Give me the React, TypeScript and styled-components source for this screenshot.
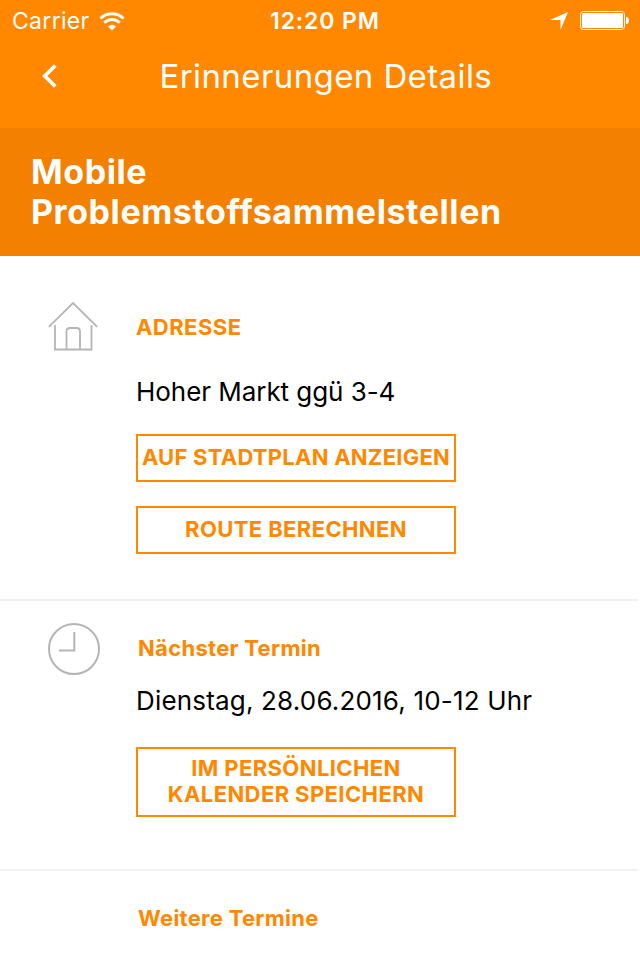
import React from "react";
import styled, { createGlobalStyle } from "styled-components";

const Global = createGlobalStyle`
  * { box-sizing: border-box; }
  body { margin: 0; background: #fff; font-family: Inter, "Liberation Sans", sans-serif; }
`;

const Screen = styled.main`
  width: 640px;
  height: 960px;
  overflow: hidden;
  background: #fff;
  color: #000;
`;

const Header = styled.header`
  height: 128px;
  background: #ff8800;
  color: #fff;
`;

const StatusBar = styled.div`
  display: grid;
  grid-template-columns: 258px auto 1fr;
  align-items: center;
  height: 40px;
  padding: 2px 11px 0 12px;
  font-size: 23px;
  line-height: 28px;
`;

const StatusGroup = styled.div<{ $end?: boolean }>`
  display: flex;
  align-items: center;
  justify-content: ${(p) => (p.$end ? "flex-end" : "flex-start")};
  gap: ${(p) => (p.$end ? 12 : 9)}px;
`;

const Text = styled.span<{ $spacing?: number; $weight?: number }>`
  white-space: nowrap;
  letter-spacing: ${(p) => p.$spacing ?? 0}px;
  font-weight: ${(p) => p.$weight ?? 400};
`;

const NavBar = styled.nav`
  display: grid;
  grid-template-columns: 159.500px 1fr;
  align-items: center;
  height: 72px;
`;

const BackButton = styled.button`
  display: flex;
  padding: 0 0 0 40px;
  border: 0;
  background: none;
  color: inherit;
`;

const NavTitle = styled.h1`
  margin: 0;
  font-size: 33px;
  font-weight: 400;
  line-height: 40px;
`;

const Banner = styled.div`
  height: 128px;
  padding: 24px 31px;
  background: #f48000;
  color: #fff;
`;

const BannerTitle = styled.h2`
  margin: 0;
  font-size: 34px;
  line-height: 40px;
`;

const Section = styled.section<{ $height: number; $top: number }>`
  display: grid;
  grid-template-columns: 88px 1fr;
  align-items: start;
  width: 638px;
  height: ${(p) => p.$height}px;
  padding: ${(p) => p.$top}px 0 0 48px;
  border-bottom: 2px solid #f1f1f1;
`;

const Body = styled.div<{ $top: number }>`
  padding-top: ${(p) => p.$top}px;
`;

const Label = styled.h3<{ $inset?: number }>`
  margin: 0 0 0 ${(p) => p.$inset ?? 0}px;
  color: #ff8800;
  font-size: 22px;
  line-height: 28px;
`;

const Value = styled.p<{ $top: number }>`
  margin: ${(p) => p.$top}px 0 0;
  font-size: 26px;
  line-height: 32px;
`;

const Action = styled.button<{ $top: number; $height?: number }>`
  display: flex;
  flex-direction: column;
  align-items: center;
  justify-content: center;
  width: 320px;
  height: ${(p) => p.$height ?? 48}px;
  margin-top: ${(p) => p.$top}px;
  padding: 0 0 2px;
  border: 2px solid #ff8800;
  background: #fff;
  color: #ff8800;
  font: 700 22px/26px Inter, "Liberation Sans", sans-serif;
`;

export default function App() {
  return (
    <>
      <Global />
      <Screen>
        <Header>
          <StatusBar>
            <StatusGroup>
              <Text $spacing={0.3}>Carrier</Text>
              <svg width="26" height="19" viewBox="0 0 26 19" fill="none" stroke="#fff" strokeWidth="3">
                <path d="M1.500 6.500a16.500 16.500 0 0 1 23 0M5.300 10.700a11 11 0 0 1 15.400 0" />
                <path d="M13 18.500l-4-4a5.700 5.700 0 0 1 8 0z" fill="#fff" stroke="none" />
              </svg>
            </StatusGroup>
            <Text $weight={600} $spacing={0.9}>12:20 PM</Text>
            <StatusGroup $end>
              <svg width="18" height="18" viewBox="0 0 18 18" fill="#fff"><path d="M18 0L10.500 18V8H0z" /></svg>
              <svg width="49" height="20" viewBox="0 0 49 20" fill="none">
                <rect x=".5" y=".5" width="44" height="18" rx="3" stroke="#fff" />
                <rect x="2" y="2" width="41" height="15" rx="1.500" fill="#fff" />
                <path d="M46 6h1q2 1 2 3.500t-2 3.500h-1z" fill="#fff" />
              </svg>
            </StatusGroup>
          </StatusBar>
          <NavBar>
            <BackButton aria-label="Zurück">
              <svg width="20" height="26" viewBox="0 0 20 26" fill="none" stroke="#fff" strokeWidth="3.800"><path d="M15.300 2.500L4.800 13l10.500 10.500" /></svg>
            </BackButton>
            <NavTitle><Text $spacing={0.4}>Erinnerungen Details</Text></NavTitle>
          </NavBar>
        </Header>
        <Banner>
          <BannerTitle><Text $weight={650} $spacing={0.57}>Mobile<br />Problemstoffsammelstellen</Text></BannerTitle>
        </Banner>
        <Section $height={345} $top={46}>
          <svg width="50" height="50" viewBox="0 0 50 50" fill="none" stroke="#b5b5b5" strokeWidth="1.800"><path d="M.8 24.800L25 1l24.200 23.800M7 23v24.500h36.500V23M18.500 47V29.500q0-3.500 3.500-3.500h6.500q3.500 0 3.500 3.500V47" /></svg>
          <Body $top={11}>
            <Label><Text $weight={650} $spacing={0.45}>ADRESSE</Text></Label>
            <Value $top={35}><Text $spacing={-0.05}>Hoher Markt ggü 3-4</Text></Value>
            <Action $top={26}><Text $weight={650} $spacing={0.25}>AUF STADTPLAN ANZEIGEN</Text></Action>
            <Action $top={24}><Text $weight={650} $spacing={0.38}>ROUTE BERECHNEN</Text></Action>
          </Body>
        </Section>
        <Section $height={270} $top={22}>
          <svg width="52" height="52" viewBox="0 0 52 52" fill="none" stroke="#b5b5b5" strokeWidth="2"><circle cx="26" cy="26" r="25" /><path d="M26.300 9v18.500H11" /></svg>
          <Body $top={11}>
            <Label $inset={2}><Text $weight={650} $spacing={0.3}>Nächster Termin</Text></Label>
            <Value $top={23}><Text $spacing={0.18}>Dienstag, 28.06.2016, 10-12 Uhr</Text></Value>
            <Action $top={30} $height={70}>
              <Text $weight={650} $spacing={0.4}>IM PERSÖNLICHEN</Text>
              <Text $weight={650} $spacing={0.4}>KALENDER SPEICHERN</Text>
            </Action>
          </Body>
        </Section>
        <Section $height={120} $top={33}>
          <span />
          <Body $top={0}><Label $inset={2}><Text $weight={650} $spacing={0.27}>Weitere Termine</Text></Label></Body>
        </Section>
      </Screen>
    </>
  );
}
